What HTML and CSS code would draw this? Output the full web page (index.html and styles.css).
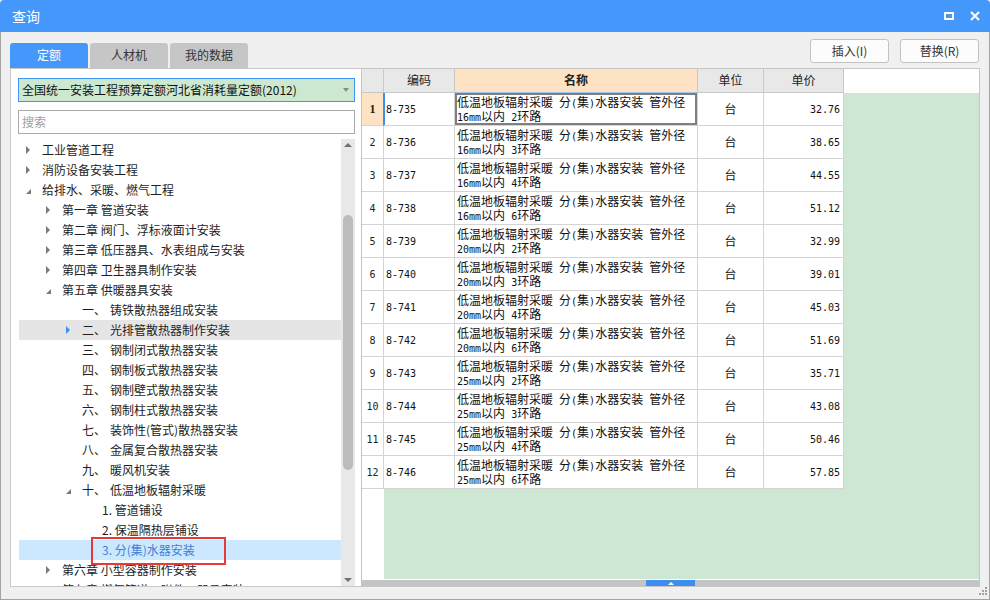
FILE: index.html
```html
<!DOCTYPE html>
<html lang="zh-CN">
<head>
<meta charset="utf-8">
<title>查询</title>
<link rel="stylesheet" href="styles.css">
</head>
<body>
<div class="window">
  <div class="titlebar">
    <span class="title">查询</span>
    <div class="winbtns">
      <svg width="10" height="8" viewBox="0 0 10 8"><rect x="1" y="1" width="8" height="6" fill="none" stroke="#fff" stroke-width="2"/></svg>
      <svg width="10" height="10" viewBox="0 0 10 10"><path d="M1 1L9 9M9 1L1 9" stroke="#fff" stroke-width="2"/></svg>
    </div>
  </div>
  <div class="frame">
    <div class="toolbar">
      <div class="tabs">
        <div class="tab active">定额</div>
        <div class="tab">人材机</div>
        <div class="tab">我的数据</div>
      </div>
      <div class="actions">
        <div class="btn">插入(I)</div>
        <div class="btn">替换(R)</div>
      </div>
    </div>
    <div class="content">
      <div class="left">
        <div class="select"><span>全国统一安装工程预算定额河北省消耗量定额(2012)</span><i class="caret"></i></div>
        <div class="search">搜索</div>
        <div class="treewrap">
          <div class="tree">
            <div class="node l0"><span class="tog"><i class="tri-r"></i></span>工业管道工程</div>
            <div class="node l0"><span class="tog"><i class="tri-r"></i></span>消防设备安装工程</div>
            <div class="node l0"><span class="tog"><i class="tri-d"></i></span>给排水、采暖、燃气工程</div>
            <div class="node l1"><span class="tog"><i class="tri-r"></i></span>第一章 管道安装</div>
            <div class="node l1"><span class="tog"><i class="tri-r"></i></span>第二章 阀门、浮标液面计安装</div>
            <div class="node l1"><span class="tog"><i class="tri-r"></i></span>第三章 低压器具、水表组成与安装</div>
            <div class="node l1"><span class="tog"><i class="tri-r"></i></span>第四章 卫生器具制作安装</div>
            <div class="node l1"><span class="tog"><i class="tri-d"></i></span>第五章 供暖器具安装</div>
            <div class="node l2"><span class="tog"></span><span class="pfx">一、</span>铸铁散热器组成安装</div>
            <div class="node l2 hover"><span class="tog"><i class="tri-r blue"></i></span><span class="pfx">二、</span>光排管散热器制作安装</div>
            <div class="node l2"><span class="tog"></span><span class="pfx">三、</span>钢制闭式散热器安装</div>
            <div class="node l2"><span class="tog"></span><span class="pfx">四、</span>钢制板式散热器安装</div>
            <div class="node l2"><span class="tog"></span><span class="pfx">五、</span>钢制壁式散热器安装</div>
            <div class="node l2"><span class="tog"></span><span class="pfx">六、</span>钢制柱式散热器安装</div>
            <div class="node l2"><span class="tog"></span><span class="pfx">七、</span>装饰性(管式)散热器安装</div>
            <div class="node l2"><span class="tog"></span><span class="pfx">八、</span>金属复合散热器安装</div>
            <div class="node l2"><span class="tog"></span><span class="pfx">九、</span>暖风机安装</div>
            <div class="node l2"><span class="tog"><i class="tri-d"></i></span><span class="pfx">十、</span>低温地板辐射采暖</div>
            <div class="node l3"><span class="tog"></span>1. 管道铺设</div>
            <div class="node l3"><span class="tog"></span>2. 保温隔热层铺设</div>
            <div class="node l3 sel"><span class="tog"></span><span class="boxed">3. 分(集)水器安装</span></div>
            <div class="node l1"><span class="tog"><i class="tri-r"></i></span>第六章 小型容器制作安装</div>
            <div class="node l1"><span class="tog"><i class="tri-r"></i></span>第七章 燃气管道、附件、器具安装</div>
          </div>
          <div class="vscroll">
            <div class="arr"><i class="up"></i></div>
            <div class="thumb"></div>
            <div class="spacer"></div>
            <div class="arr"><i class="down"></i></div>
          </div>
        </div>
      </div>
      <div class="grid">
        <div class="hrow">
          <div class="c w-num"></div>
          <div class="c w-code">编码</div>
          <div class="c w-name hname">名称</div>
          <div class="c w-unit">单位</div>
          <div class="c w-price">单价</div>
          <div class="fill"></div>
        </div>
        <div class="row cur">
          <div class="c w-num num">1</div>
          <div class="c w-code code">8-735</div>
          <div class="c w-name name"><div>低温地板辐射采暖<span class="h"> </span>分<span class="h">(</span>集<span class="h">)</span>水器安装<span class="h"> </span>管外径<br><span class="h">16mm</span>以内<span class="h"> 2</span>环路</div></div>
          <div class="c w-unit unit">台</div>
          <div class="c w-price price">32.76</div>
          <div class="fill"></div>
        </div>
        <div class="row">
          <div class="c w-num num">2</div>
          <div class="c w-code code">8-736</div>
          <div class="c w-name name"><div>低温地板辐射采暖<span class="h"> </span>分<span class="h">(</span>集<span class="h">)</span>水器安装<span class="h"> </span>管外径<br><span class="h">16mm</span>以内<span class="h"> 3</span>环路</div></div>
          <div class="c w-unit unit">台</div>
          <div class="c w-price price">38.65</div>
          <div class="fill"></div>
        </div>
        <div class="row">
          <div class="c w-num num">3</div>
          <div class="c w-code code">8-737</div>
          <div class="c w-name name"><div>低温地板辐射采暖<span class="h"> </span>分<span class="h">(</span>集<span class="h">)</span>水器安装<span class="h"> </span>管外径<br><span class="h">16mm</span>以内<span class="h"> 4</span>环路</div></div>
          <div class="c w-unit unit">台</div>
          <div class="c w-price price">44.55</div>
          <div class="fill"></div>
        </div>
        <div class="row">
          <div class="c w-num num">4</div>
          <div class="c w-code code">8-738</div>
          <div class="c w-name name"><div>低温地板辐射采暖<span class="h"> </span>分<span class="h">(</span>集<span class="h">)</span>水器安装<span class="h"> </span>管外径<br><span class="h">16mm</span>以内<span class="h"> 6</span>环路</div></div>
          <div class="c w-unit unit">台</div>
          <div class="c w-price price">51.12</div>
          <div class="fill"></div>
        </div>
        <div class="row">
          <div class="c w-num num">5</div>
          <div class="c w-code code">8-739</div>
          <div class="c w-name name"><div>低温地板辐射采暖<span class="h"> </span>分<span class="h">(</span>集<span class="h">)</span>水器安装<span class="h"> </span>管外径<br><span class="h">20mm</span>以内<span class="h"> 2</span>环路</div></div>
          <div class="c w-unit unit">台</div>
          <div class="c w-price price">32.99</div>
          <div class="fill"></div>
        </div>
        <div class="row">
          <div class="c w-num num">6</div>
          <div class="c w-code code">8-740</div>
          <div class="c w-name name"><div>低温地板辐射采暖<span class="h"> </span>分<span class="h">(</span>集<span class="h">)</span>水器安装<span class="h"> </span>管外径<br><span class="h">20mm</span>以内<span class="h"> 3</span>环路</div></div>
          <div class="c w-unit unit">台</div>
          <div class="c w-price price">39.01</div>
          <div class="fill"></div>
        </div>
        <div class="row">
          <div class="c w-num num">7</div>
          <div class="c w-code code">8-741</div>
          <div class="c w-name name"><div>低温地板辐射采暖<span class="h"> </span>分<span class="h">(</span>集<span class="h">)</span>水器安装<span class="h"> </span>管外径<br><span class="h">20mm</span>以内<span class="h"> 4</span>环路</div></div>
          <div class="c w-unit unit">台</div>
          <div class="c w-price price">45.03</div>
          <div class="fill"></div>
        </div>
        <div class="row">
          <div class="c w-num num">8</div>
          <div class="c w-code code">8-742</div>
          <div class="c w-name name"><div>低温地板辐射采暖<span class="h"> </span>分<span class="h">(</span>集<span class="h">)</span>水器安装<span class="h"> </span>管外径<br><span class="h">20mm</span>以内<span class="h"> 6</span>环路</div></div>
          <div class="c w-unit unit">台</div>
          <div class="c w-price price">51.69</div>
          <div class="fill"></div>
        </div>
        <div class="row">
          <div class="c w-num num">9</div>
          <div class="c w-code code">8-743</div>
          <div class="c w-name name"><div>低温地板辐射采暖<span class="h"> </span>分<span class="h">(</span>集<span class="h">)</span>水器安装<span class="h"> </span>管外径<br><span class="h">25mm</span>以内<span class="h"> 2</span>环路</div></div>
          <div class="c w-unit unit">台</div>
          <div class="c w-price price">35.71</div>
          <div class="fill"></div>
        </div>
        <div class="row">
          <div class="c w-num num">10</div>
          <div class="c w-code code">8-744</div>
          <div class="c w-name name"><div>低温地板辐射采暖<span class="h"> </span>分<span class="h">(</span>集<span class="h">)</span>水器安装<span class="h"> </span>管外径<br><span class="h">25mm</span>以内<span class="h"> 3</span>环路</div></div>
          <div class="c w-unit unit">台</div>
          <div class="c w-price price">43.08</div>
          <div class="fill"></div>
        </div>
        <div class="row">
          <div class="c w-num num">11</div>
          <div class="c w-code code">8-745</div>
          <div class="c w-name name"><div>低温地板辐射采暖<span class="h"> </span>分<span class="h">(</span>集<span class="h">)</span>水器安装<span class="h"> </span>管外径<br><span class="h">25mm</span>以内<span class="h"> 4</span>环路</div></div>
          <div class="c w-unit unit">台</div>
          <div class="c w-price price">50.46</div>
          <div class="fill"></div>
        </div>
        <div class="row">
          <div class="c w-num num">12</div>
          <div class="c w-code code">8-746</div>
          <div class="c w-name name"><div>低温地板辐射采暖<span class="h"> </span>分<span class="h">(</span>集<span class="h">)</span>水器安装<span class="h"> </span>管外径<br><span class="h">25mm</span>以内<span class="h"> 6</span>环路</div></div>
          <div class="c w-unit unit">台</div>
          <div class="c w-price price">57.85</div>
          <div class="fill"></div>
        </div>
        <div class="filler"><div class="blank"></div><div class="green"></div></div>
        <div class="hscroll"><div class="hthumb"><i class="hup"></i></div></div>
      </div>
    </div>
    <div class="status">
      <svg width="8" height="8" viewBox="0 0 8 8"><g fill="#a0a0a0"><rect x="6" y="0" width="2" height="2"/><rect x="3" y="3" width="2" height="2"/><rect x="6" y="3" width="2" height="2"/><rect x="0" y="6" width="2" height="2"/><rect x="3" y="6" width="2" height="2"/><rect x="6" y="6" width="2" height="2"/></g></svg>
    </div>
  </div>
</div>
</body>
</html>
```

FILE: styles.css
```css
* { box-sizing: border-box; margin: 0; padding: 0; }
html, body { width: 990px; height: 600px; overflow: hidden; }
body {
  font: 12px/1.2 "Noto Sans CJK SC", "Microsoft YaHei", sans-serif;
  color: #1e1e1e;
  background: #f0f0f0;
}
i { font-style: normal; display: block; }

.window { width: 990px; height: 600px; display: flex; flex-direction: column; }

.titlebar {
  height: 32px; flex: none;
  background: #4598fb;
  border-radius: 4px 4px 0 0;
  display: flex; align-items: center;
  padding: 0 10px 0 12px;
}
.title { color: #fff; font-size: 14px; flex: 1; }
.winbtns { display: flex; align-items: center; gap: 16px; }

.frame {
  flex: 1; display: flex; flex-direction: column;
  border: 1px solid #a3a3a3; border-top: 0;
  background: #f0f0f0;
}

.toolbar { height: 36px; flex: none; display: flex; padding: 0 10px 0 9px; }
.tabs { display: flex; gap: 2px; align-self: flex-end; }
.tab {
  width: 78px; height: 25px;
  border-radius: 3px 3px 0 0;
  background: #c6c6c6; color: #333;
  display: flex; align-items: center; justify-content: center;
}
.tab.active { background: #4598fb; color: #fff; }
.actions { margin-left: auto; display: flex; gap: 11px; padding-top: 7px; }
.btn {
  width: 79px; height: 24px;
  border: 1px solid #c2c2c2; border-radius: 3px;
  background: #fcfcfc; color: #333;
  display: flex; align-items: center; justify-content: center;
}

.content { height: 519px; flex: none; display: flex; padding: 0 9px; }

.left {
  width: 351px; flex: none;
  border: 1px solid #c9c9c9; border-right: 0;
  background: #fff;
  display: flex; flex-direction: column;
  padding: 0 6px 0 7px;
}
.select {
  margin-top: 9px; height: 24px; flex: none;
  border: 1px solid #3d96f2; background: #cde8d0;
  display: flex; align-items: center;
  padding: 0 5px 0 3px; color: #111;
}
.select span { flex: 1; }
.caret { width: 0; height: 0; border-left: 3px solid transparent; border-right: 3px solid transparent; border-top: 4px solid #8a8a8a; }
.search {
  margin-top: 8px; height: 24px; flex: none;
  border: 1px solid #a9a9a9; color: #a0a0a0;
  display: flex; align-items: center; padding-left: 3px;
}
.treewrap { margin-top: 5px; flex: 1; min-height: 0; display: flex; }
.tree { flex: 1; overflow: hidden; padding: 1px 0 0 1px; }
.node { height: 20px; line-height: 20px; display: flex; align-items: center; white-space: nowrap; color: #1e1e1e; }
.l1 { padding-left: 20px; }
.l2 { padding-left: 40px; }
.l3 { padding-left: 60px; }
.tog { width: 23px; height: 20px; flex: none; display: flex; align-items: center; padding-left: 7px; }
.tri-r { width: 0; height: 0; border-left: 4px solid #7a7a7a; border-top: 4px solid transparent; border-bottom: 4px solid transparent; }
.tri-r.blue { border-left-color: #3d8ef0; }
.tri-d { width: 0; height: 0; border-left: 5px solid transparent; border-bottom: 5px solid #7a7a7a; margin-top: 2px; }
.pfx { display: inline-block; width: 28px; flex: none; }
.node.hover { background: #e5e5e5; }
.node.sel { background: #cce8ff; color: #3f7fd6; }
.boxed { position: relative; display: inline-block; height: 20px; }
.boxed::after {
  content: ""; position: absolute;
  left: -11px; top: -3px; width: 131px; height: 24px;
  border: 2px solid #e53a3a;
}

.vscroll { width: 14px; flex: none; background: #e8e8e8; display: flex; flex-direction: column; align-items: center; }
.arr { height: 12px; width: 14px; display: flex; align-items: center; justify-content: center; flex: none; }
.up { width: 0; height: 0; border-left: 4px solid transparent; border-right: 4px solid transparent; border-bottom: 4px solid #707070; }
.down { width: 0; height: 0; border-left: 4px solid transparent; border-right: 4px solid transparent; border-top: 4px solid #707070; }
.thumb { width: 10px; height: 255px; border-radius: 5px; background: #bcbcbc; margin-top: 64px; flex: none; }
.spacer { flex: 1; }

.grid {
  flex: 1; min-width: 0;
  border: 1px solid #c6c6c6;
  background: #fff;
  display: flex; flex-direction: column;
}
.hrow { height: 24px; flex: none; display: flex; }
.row { height: 33px; flex: none; display: flex; }
.c {
  flex: none; display: flex; align-items: center;
  border-right: 1px solid #d4d4d4; border-bottom: 1px solid #d4d4d4;
  background: #fff;
}
.hrow .c { background: #e8e8e8; border-color: #c8c8c8; justify-content: center; color: #222; }
.hrow .hname { background: #fde3c3; font-weight: bold; border-bottom-color: #9cc6ef; }
.w-num { width: 22px; }
.w-code { width: 71px; }
.w-name { width: 243px; }
.w-unit { width: 66px; }
.w-price { width: 80px; }
.fill { flex: 1; }
.row .fill { background: #cde7d2; }
.hrow .fill { background: #fff; }

.num { justify-content: center; font: 10px "DejaVu Sans Mono", monospace; color: #222; }
.code { padding-left: 2px; font: 10px "DejaVu Sans Mono", monospace; color: #111; }
.name { padding-left: 2px; line-height: 14px; color: #111; white-space: nowrap; }
.h { font: 10px "DejaVu Sans Mono", monospace; }
.unit { justify-content: center; color: #111; }
.price { justify-content: flex-end; padding-right: 3px; font: 10px "DejaVu Sans Mono", monospace; color: #111; }

.row.cur .num { background: #fde3c3; font: bold 12px "Liberation Serif", serif; border-right-color: #3d8ef0; }
.row.cur .code { box-shadow: inset 1px 0 0 #3d8ef0; }
.row.cur .name { box-shadow: inset 0 0 0 2px #7f7f7f; }

.filler { flex: 1; display: flex; min-height: 0; }
.filler .blank { width: 22px; }
.filler .green { flex: 1; background: #cde7d2; }
.hscroll { height: 6px; flex: none; margin-top: 1px; background: #c4c4c4; display: flex; }
.hthumb { margin-left: 284px; width: 49px; background: #3d8ef0; display: flex; align-items: center; justify-content: center; }
.hup { width: 0; height: 0; border-left: 3px solid transparent; border-right: 3px solid transparent; border-bottom: 3px solid #fff; }

.status { flex: 1; display: flex; justify-content: flex-end; align-items: flex-start; padding: 0 2px 0 0; }
```
